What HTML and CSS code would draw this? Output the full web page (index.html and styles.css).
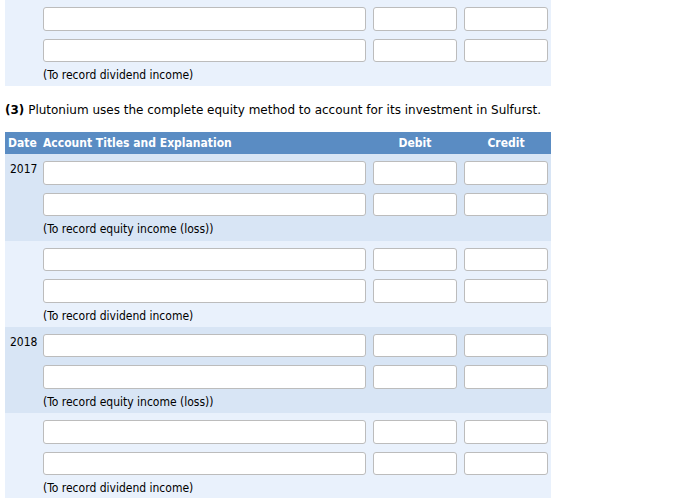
FILE: index.html
```html
<!DOCTYPE html>
<html lang="en">
<head>
  <meta charset="UTF-8">
  <title>Journal entries</title>
  <link rel="stylesheet" href="styles.css">
</head>
<body>

<div class="page">

  <!-- tail of part (2) -->
  <div class="journal">
    <div class="entry entry-light">
      <div class="row">
        <div class="date"></div>
        <input type="text" class="acct">
        <input type="text" class="amt">
        <input type="text" class="amt">
      </div>
      <div class="row">
        <div class="date"></div>
        <input type="text" class="acct">
        <input type="text" class="amt">
        <input type="text" class="amt">
      </div>
      <div class="row note-row">
        <div class="date"></div>
        <div class="note">(To record dividend income)</div>
      </div>
    </div>
  </div>

  <p class="question"><b>(3)</b> Plutonium uses the complete equity method to account for its investment in Sulfurst.</p>

  <div class="journal">
    <div class="row head">
      <div class="date">Date</div>
      <div>Account Titles and Explanation</div>
      <div class="center">Debit</div>
      <div class="center">Credit</div>
    </div>

    <div class="entry entry-dark">
      <div class="row">
        <div class="date">2017</div>
        <input type="text" class="acct">
        <input type="text" class="amt">
        <input type="text" class="amt">
      </div>
      <div class="row">
        <div class="date"></div>
        <input type="text" class="acct">
        <input type="text" class="amt">
        <input type="text" class="amt">
      </div>
      <div class="row note-row">
        <div class="date"></div>
        <div class="note">(To record equity income (loss))</div>
      </div>
    </div>

    <div class="entry entry-light">
      <div class="row">
        <div class="date"></div>
        <input type="text" class="acct">
        <input type="text" class="amt">
        <input type="text" class="amt">
      </div>
      <div class="row">
        <div class="date"></div>
        <input type="text" class="acct">
        <input type="text" class="amt">
        <input type="text" class="amt">
      </div>
      <div class="row note-row">
        <div class="date"></div>
        <div class="note">(To record dividend income)</div>
      </div>
    </div>

    <div class="entry entry-dark">
      <div class="row">
        <div class="date">2018</div>
        <input type="text" class="acct">
        <input type="text" class="amt">
        <input type="text" class="amt">
      </div>
      <div class="row">
        <div class="date"></div>
        <input type="text" class="acct">
        <input type="text" class="amt">
        <input type="text" class="amt">
      </div>
      <div class="row note-row">
        <div class="date"></div>
        <div class="note">(To record equity income (loss))</div>
      </div>
    </div>

    <div class="entry entry-light">
      <div class="row">
        <div class="date"></div>
        <input type="text" class="acct">
        <input type="text" class="amt">
        <input type="text" class="amt">
      </div>
      <div class="row">
        <div class="date"></div>
        <input type="text" class="acct">
        <input type="text" class="amt">
        <input type="text" class="amt">
      </div>
      <div class="row note-row">
        <div class="date"></div>
        <div class="note">(To record dividend income)</div>
      </div>
    </div>
  </div>

</div>

</body>
</html>
```

FILE: styles.css
```css
body {
  margin: 0;
  background: #fff;
  font-family: "DejaVu Sans", Verdana, sans-serif;
  color: #000;
}

.page {
  width: 546px;
  padding-left: 5px;
}

.journal {
  font-family: "DejaVu Sans Condensed", Tahoma, sans-serif;
  font-size: 12px;
}

.row {
  display: grid;
  grid-template-columns: 31px 323px 84px 84px;
  column-gap: 7px;
  padding-right: 3px;
  align-items: center;
}

.entry {
  padding-top: 7px;
  display: flex;
  flex-direction: column;
  gap: 8px;
}

.entry-light { background: #e9f1fc; }
.entry-dark { background: #d8e5f5; }

.date {
  padding-left: 5px;
  align-self: start;
  line-height: 16px;
}

input {
  box-sizing: border-box;
  height: 23.5px;
  width: 100%;
  margin: 0;
  padding: 2px 4px;
  border: 1px solid #bcbcbc;
  border-radius: 3px;
  background: #fff;
  font: inherit;
}

.note-row {
  margin-top: -8px;
  height: 24.3px;
  align-items: start;
}

.note {
  grid-column: 2 / span 3;
  padding-top: 5px;
  line-height: 16px;
}

.question {
  margin: 0;
  padding: 16px 0 14px;
  font-size: 12px;
  line-height: 16px;
}

.head {
  height: 22px;
  background: #5a8cc3;
  color: #fff;
  font-weight: bold;
}

.head .date {
  padding-left: 3px;
  align-self: center;
}

.center { text-align: center; }
```
